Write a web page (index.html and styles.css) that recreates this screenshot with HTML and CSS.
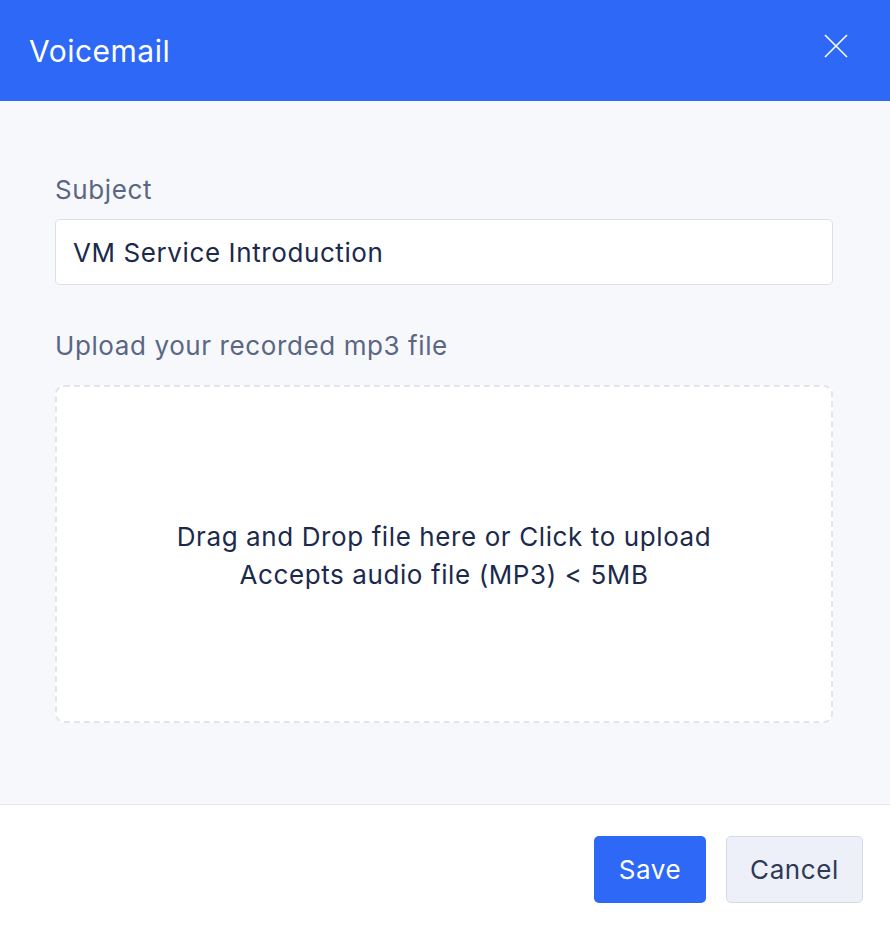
FILE: index.html
```html
<!DOCTYPE html>
<html>
    <head>
        <title>Voicemail</title>
        <meta charset="UTF-8">
        <meta name="viewport" content="width=device-width, initial-scale=1.0">
        <link rel="stylesheet" href="styles.css">
    </head>
    <body>
        <div class="modal">
            <div class="modalHeader">
                <div class="modalTitle">Voicemail</div>
                <div class="closeButton">
                    <svg width="24" height="24" viewBox="0 0 24 24">
                        <path d="M1 1 L23 23 M23 1 L1 23" stroke="#ffffff" stroke-width="1.6" fill="none"/>
                    </svg>
                </div>
            </div>
            <div class="modalBody">
                <label class="fieldLabel" for="subject">Subject</label>
                <input type="text" id="subject" value="VM Service Introduction">
                <label class="fieldLabel uploadLabel">Upload your recorded mp3 file</label>
                <div class="dropZone">
                    <div>Drag and Drop file here or Click to upload</div>
                    <div>Accepts audio file (MP3) &lt; 5MB</div>
                </div>
            </div>
            <div class="modalFooter">
                <input type="button" class="saveButton" value="Save">
                <input type="button" class="cancelButton" value="Cancel">
            </div>
        </div>
    </body>
</html>
```

FILE: styles.css
```css
body{
    margin: 0;
    font-family: Inter, "Noto Sans", sans-serif;
    background-color: #ffffff;
}

.modal{
    width: 890px;
    height: 930px;
    display: flex;
    flex-direction: column;
}

.modalHeader{
    height: 101px;
    box-sizing: border-box;
    background-color: #2d68f6;
    display: flex;
    align-items: center;
    justify-content: space-between;
    padding: 0 42px 0 29px;
}
.modalTitle{
    color: #ffffff;
    font-size: 30px;
    letter-spacing: 0.5px;
}
.closeButton{
    display: flex;
    align-self: flex-start;
    margin-top: 34px;
}

.modalBody{
    height: 704px;
    box-sizing: border-box;
    background-color: #f7f8fc;
    border-bottom: 1px solid #e3e6ee;
    padding: 73px 57px 0 55px;
    display: flex;
    flex-direction: column;
}
.fieldLabel{
    display: block;
    color: #5b6782;
    font-size: 26px;
    letter-spacing: 0.6px;
    line-height: 32px;
    margin-bottom: 13px;
}
.uploadLabel{
    margin-top: 45px;
    margin-bottom: 23px;
}
input[type=text]{
    height: 66px;
    padding: 0 17px;
    border: 1px solid #dbe0e8;
    border-radius: 5px;
    background-color: #ffffff;
    font-family: Inter, "Noto Sans", sans-serif;
    font-size: 26px;
    letter-spacing: 0.6px;
    color: #1b2a4c;
    box-sizing: border-box;
}
.dropZone{
    height: 338px;
    border: 2px dashed #e3e5ec;
    border-radius: 9px;
    background-color: #ffffff;
    box-sizing: border-box;
    display: flex;
    flex-direction: column;
    align-items: center;
    justify-content: center;
    padding-top: 4px;
    font-size: 26px;
    letter-spacing: 0.6px;
    line-height: 38px;
    color: #1b2a4c;
}

.modalFooter{
    flex: 1;
    display: flex;
    justify-content: flex-end;
    align-items: center;
    gap: 20px;
    padding: 4px 27px 0 0;
}
input[type=button]{
    height: 67px;
    border-radius: 5px;
    font-family: Inter, "Noto Sans", sans-serif;
    font-size: 26px;
    letter-spacing: 0.6px;
    cursor: pointer;
}
.saveButton{
    width: 112px;
    border: none;
    background-color: #2d68f6;
    color: #ffffff;
}
.cancelButton{
    width: 137px;
    border: 1px solid #d6dae5;
    background-color: #edf0f8;
    color: #2e3a57;
}
```
